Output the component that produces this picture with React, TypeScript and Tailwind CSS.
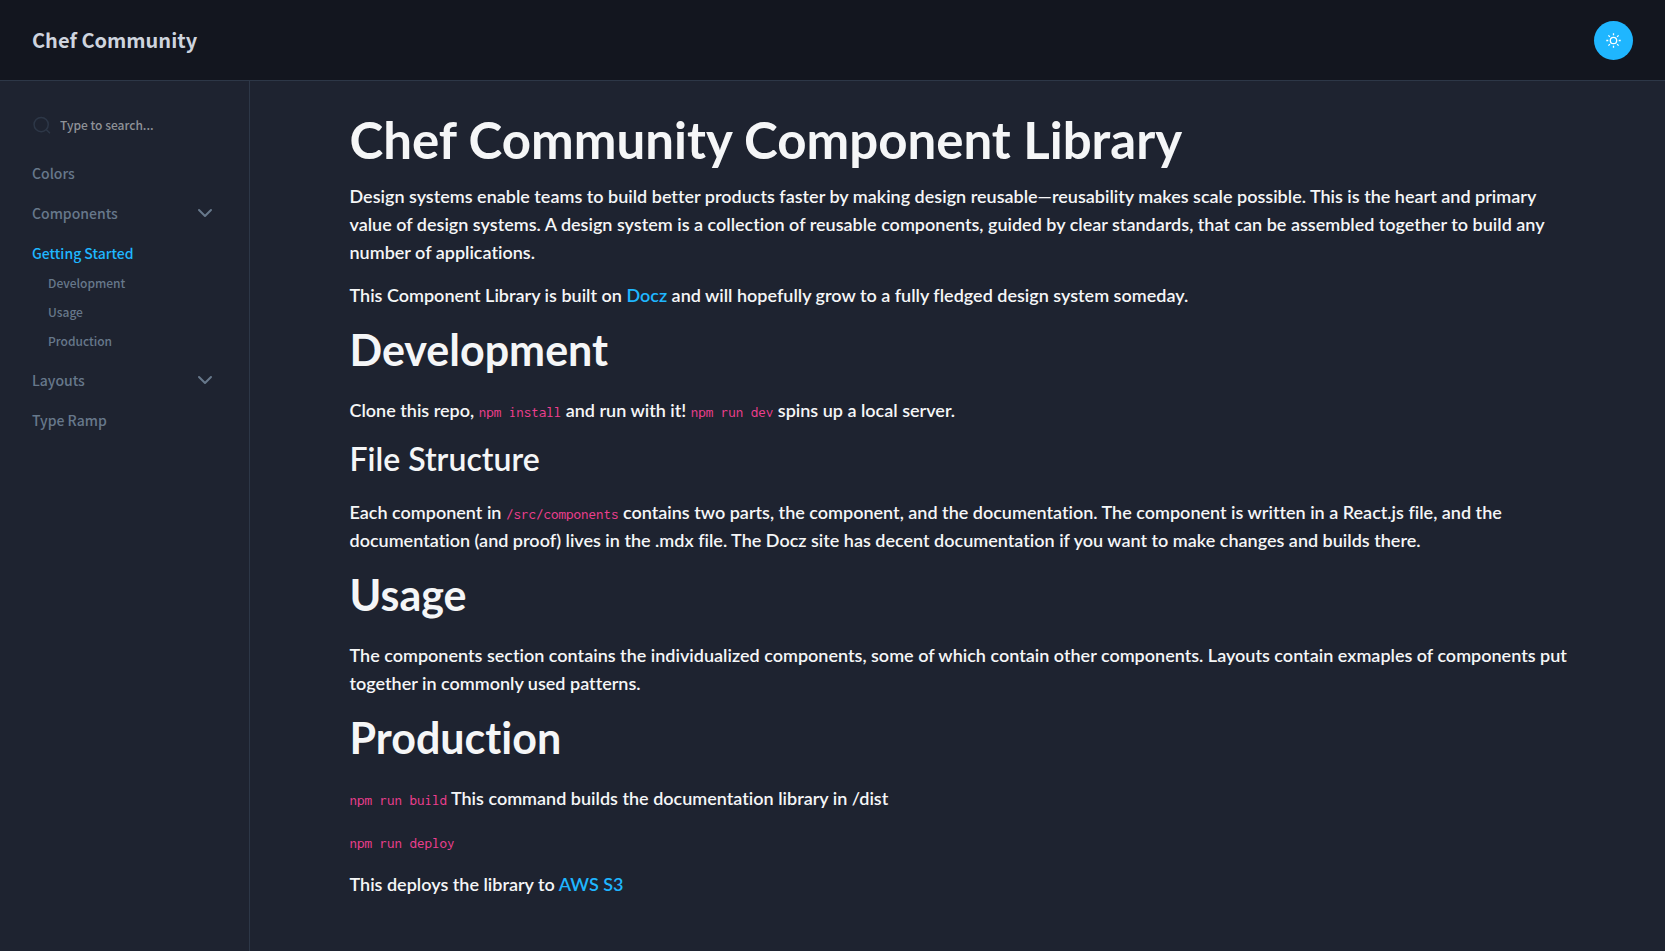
import type { ReactNode } from "react";

const heading2 = "mt-[14px] text-[43px] leading-[54px] font-bold";
const paragraph = "text-[18px] leading-[28px] font-semibold";

function Code({ children }: { children: ReactNode }) {
  return (
    <code className="font-['Inconsolata','Liberation_Mono',monospace] text-[15px] leading-none font-normal text-[#ef3f8f]">
      {children}
    </code>
  );
}

function Chevron() {
  return (
    <svg className="h-4 w-4" viewBox="0 0 16 16" fill="none" stroke="currentColor" strokeWidth="2" strokeLinecap="round" strokeLinejoin="round" aria-hidden="true">
      <path d="M2 5l6 6 6-6" />
    </svg>
  );
}

function NavGroup({ label }: { label: string }) {
  return (
    <button type="button" className="flex h-10 w-full items-center justify-between text-left">
      {label}
      <Chevron />
    </button>
  );
}

function NavLink({ label, active }: { label: string; active?: boolean }) {
  return (
    <a href="#" className={active ? "flex h-10 items-center text-[#1fb6ff]" : "flex h-10 items-center"}>
      {label}
    </a>
  );
}

const sections = ["Development", "Usage", "Production"];

export default function App() {
  return (
    <div className="flex min-h-screen flex-col bg-[#1e2330] font-['Lato',sans-serif] text-[#f5f6f7]">
      <header className="flex h-[81px] items-center justify-between border-b border-[#2d3747] bg-[#13161f] px-8">
        <a href="#" className="font-['Noto_Sans_CJK_SC',sans-serif] text-[20px] font-bold text-[#ced4de]">
          Chef Community
        </a>
        <button type="button" aria-label="Toggle color mode" className="flex h-[39px] w-[39px] items-center justify-center rounded-full bg-[#1fb6ff] text-white">
          <svg className="h-[15px] w-[15px]" viewBox="0 0 15 15" fill="none" stroke="currentColor" strokeWidth="1.3" aria-hidden="true">
            <circle cx="7.5" cy="7.5" r="3.2" />
            <path d="M7.5 .3v2M7.5 12.7v2M.3 7.5h2M12.7 7.5h2M2.4 2.4l1.5 1.5M11.1 11.1l1.5 1.5M2.4 12.6l1.5-1.5M11.1 3.9l1.5-1.5" />
          </svg>
        </button>
      </header>
      <div className="flex grow">
        <aside className="w-[250px] shrink-0 border-r border-[#2d3747] pt-6 pr-9 pl-8 font-['Noto_Sans_CJK_SC',sans-serif] text-[14px] font-medium text-[#67788b]">
          <label className="mb-2 flex h-10 items-center gap-2">
            <svg className="h-5 w-5 shrink-0 text-[#2d3747]" viewBox="0 0 24 24" fill="none" stroke="currentColor" strokeWidth="1.8" strokeLinecap="round" aria-hidden="true">
              <circle cx="11" cy="11.5" r="8.5" />
              <path d="M17.3 17.7l3.7 3.7" />
            </svg>
            <input type="search" aria-label="Search" placeholder="Type to search..." className="w-full min-w-0 bg-transparent text-[12px] outline-none placeholder:text-[#8f9298]" />
          </label>
          <nav>
            <NavLink label="Colors" />
            <NavGroup label="Components" />
            <NavLink label="Getting Started" active />
            <ul className="-mt-[5px] mb-[5px] pl-4 text-[12px]">
              {sections.map((name) => (
                <li key={name}>
                  <a href={"#" + name.toLowerCase()} className="flex h-[29px] items-center">
                    {name}
                  </a>
                </li>
              ))}
            </ul>
            <NavGroup label="Layouts" />
            <NavLink label="Type Ramp" />
          </nav>
        </aside>
        <main className="mx-auto w-full max-w-[1280px] pt-7 pr-4 pb-10 pl-8 [font-variant-ligatures:no-common-ligatures]">
          <h1 className="text-[51px] leading-[62px] font-bold">Chef Community Component Library</h1>
          <p className={paragraph + " mt-[11px]"}>
            Design systems enable teams to build better products faster by making design reusable—reusability makes
            scale possible. This is the heart and primary value of design systems. A design system is a collection of
            reusable components, guided by clear standards, that can be assembled together to build any number of
            applications.
          </p>
          <p className={paragraph + " mt-[15px]"}>
            This Component Library is built on <a href="#" className="text-[#1fb6ff]">Docz</a> and will hopefully grow
            to a fully fledged design system someday.
          </p>
          <h2 id="development" className={heading2}>Development</h2>
          <p className={paragraph + " mt-[19px]"}>
            Clone this repo, <Code>npm install</Code> and run with it! <Code>npm run dev</Code> spins up a local
            server.
          </p>
          <h3 className="mt-[15px] text-[32px] leading-[40px] font-semibold">File Structure</h3>
          <p className={paragraph + " mt-[19px]"}>
            Each component in <Code>/src/components</Code> contains two parts, the component, and the documentation.
            The component is written in a React.js file, and the documentation (and proof) lives in the .mdx file. The
            Docz site has decent documentation if you want to make changes and builds there.
          </p>
          <h2 id="usage" className={heading2}>Usage</h2>
          <p className={paragraph + " mt-[19px]"}>
            The components section contains the individualized components, some of which contain other components.
            Layouts contain exmaples of components put together in commonly used patterns.
          </p>
          <h2 id="production" className={heading2}>Production</h2>
          <p className={paragraph + " mt-[19px]"}>
            <Code>npm run build</Code> This command builds the documentation library in /dist
          </p>
          <p className={paragraph + " mt-[15px]"}>
            <Code>npm run deploy</Code>
          </p>
          <p className={paragraph + " mt-[15px]"}>
            This deploys the library to <a href="#" className="text-[#1fb6ff]">AWS S3</a>
          </p>
        </main>
      </div>
    </div>
  );
}
